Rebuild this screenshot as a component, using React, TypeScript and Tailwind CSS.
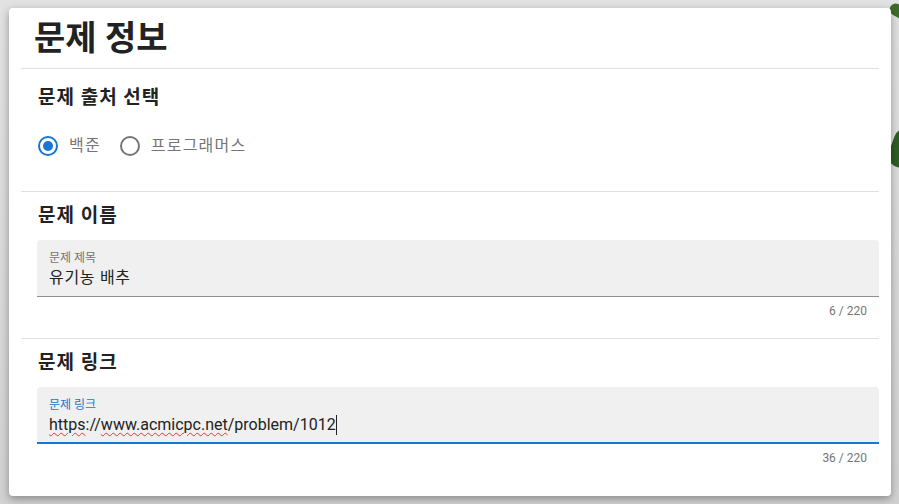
const FONT = "font-['Roboto','Noto_Sans_CJK_KR',sans-serif]";

function Radio({ checked, label }: { checked?: boolean; label: string }) {
  return (
    <label className="mr-[19px] flex items-center gap-[11px]">
      <span
        className={
          "flex h-[20px] w-[20px] items-center justify-center rounded-full border-2 " +
          (checked ? "border-[#1976d2]" : "border-[#757575]")
        }
      >
        {checked && <span className="h-[10px] w-[10px] rounded-full bg-[#1976d2]" />}
      </span>
      <span className="text-[16px] tracking-[1.2px] text-[#757575]">{label}</span>
    </label>
  );
}

function FilledField({
  label,
  children,
  focused,
  count,
}: {
  label: string;
  children: React.ReactNode;
  focused?: boolean;
  count: string;
}) {
  return (
    <div>
      <div
        className={
          "h-[57px] rounded-t-[4px] bg-[#f0f0f0] px-[12px] pt-[10px] " +
          (focused ? "border-b-2 border-[#1976d2]" : "border-b border-[#8f8f8f]")
        }
      >
        <div className={"text-[12px] leading-[16px] " + (focused ? "text-[#1976d2]" : "text-[#757575]")}>
          {label}
        </div>
        <div className="flex items-center text-[16px] leading-[24px] text-[#222]">{children}</div>
      </div>
      <div className="pr-[12px] pt-[6px] text-right text-[12px] leading-[16px] text-[#757575]">{count}</div>
    </div>
  );
}

function Heading({ children }: { children: React.ReactNode }) {
  return <h6 className="text-[19px] font-bold leading-[28px] tracking-[1px] text-[#222]">{children}</h6>;
}

export default function App() {
  return (
    <div
      className={
        "relative h-[504px] w-[899px] overflow-hidden bg-gradient-to-b from-[#e2e2e2] to-[#d2d2d2] pl-[9px] pt-[8px] " +
        FONT
      }
    >
      {/* background leaves peeking out on the right */}
      <div className="absolute right-[-12px] top-[6px] h-[12px] w-[22px] rotate-[30deg] rounded-full bg-[#3d6b2c]" />
      <div className="absolute right-[-16px] top-[128px] h-[40px] w-[24px] rotate-[20deg] rounded-full bg-[#2f5d24]" />

      <div className="relative h-[488px] w-[882px] rounded-[4px] bg-white px-[12px] shadow-[0_3px_8px_rgba(0,0,0,0.35)]">
        <div className="flex h-[60px] items-center pl-[13px]">
          <h4 className="text-[34px] font-bold leading-none text-[#222]">문제 정보</h4>
        </div>
        <div className="h-px bg-[#e0e0e0]" />

        <section className="h-[122px] pl-[17px] pt-[15px]">
          <Heading>문제 출처 선택</Heading>
          <div className="mt-[22px] flex items-center">
            <Radio checked label="백준" />
            <Radio label="프로그래머스" />
          </div>
        </section>
        <div className="h-px bg-[#e0e0e0]" />

        <section className="h-[146px] pl-[16px] pt-[10px]">
          <div className="pl-[1px]">
            <Heading>문제 이름</Heading>
          </div>
          <div className="mt-[10px]">
            <FilledField label="문제 제목" count="6 / 220">
              <span className="tracking-[0.7px]">유기농 배추</span>
            </FilledField>
          </div>
        </section>
        <div className="h-px bg-[#e0e0e0]" />

        <section className="pl-[16px] pt-[10px]">
          <div className="pl-[1px]">
            <Heading>문제 링크</Heading>
          </div>
          <div className="mt-[10px]">
            <FilledField label="문제 링크" count="36 / 220" focused>
              <span className="underline decoration-wavy decoration-[#e53935] decoration-1 underline-offset-2">https</span>
              <span>://</span>
              <span className="underline decoration-wavy decoration-[#e53935] decoration-1 underline-offset-2">
                www.acmicpc.net
              </span>
              <span>/problem/1012</span>
              <span className="h-[20px] w-px bg-[#222]" />
            </FilledField>
          </div>
        </section>
      </div>
    </div>
  );
}
